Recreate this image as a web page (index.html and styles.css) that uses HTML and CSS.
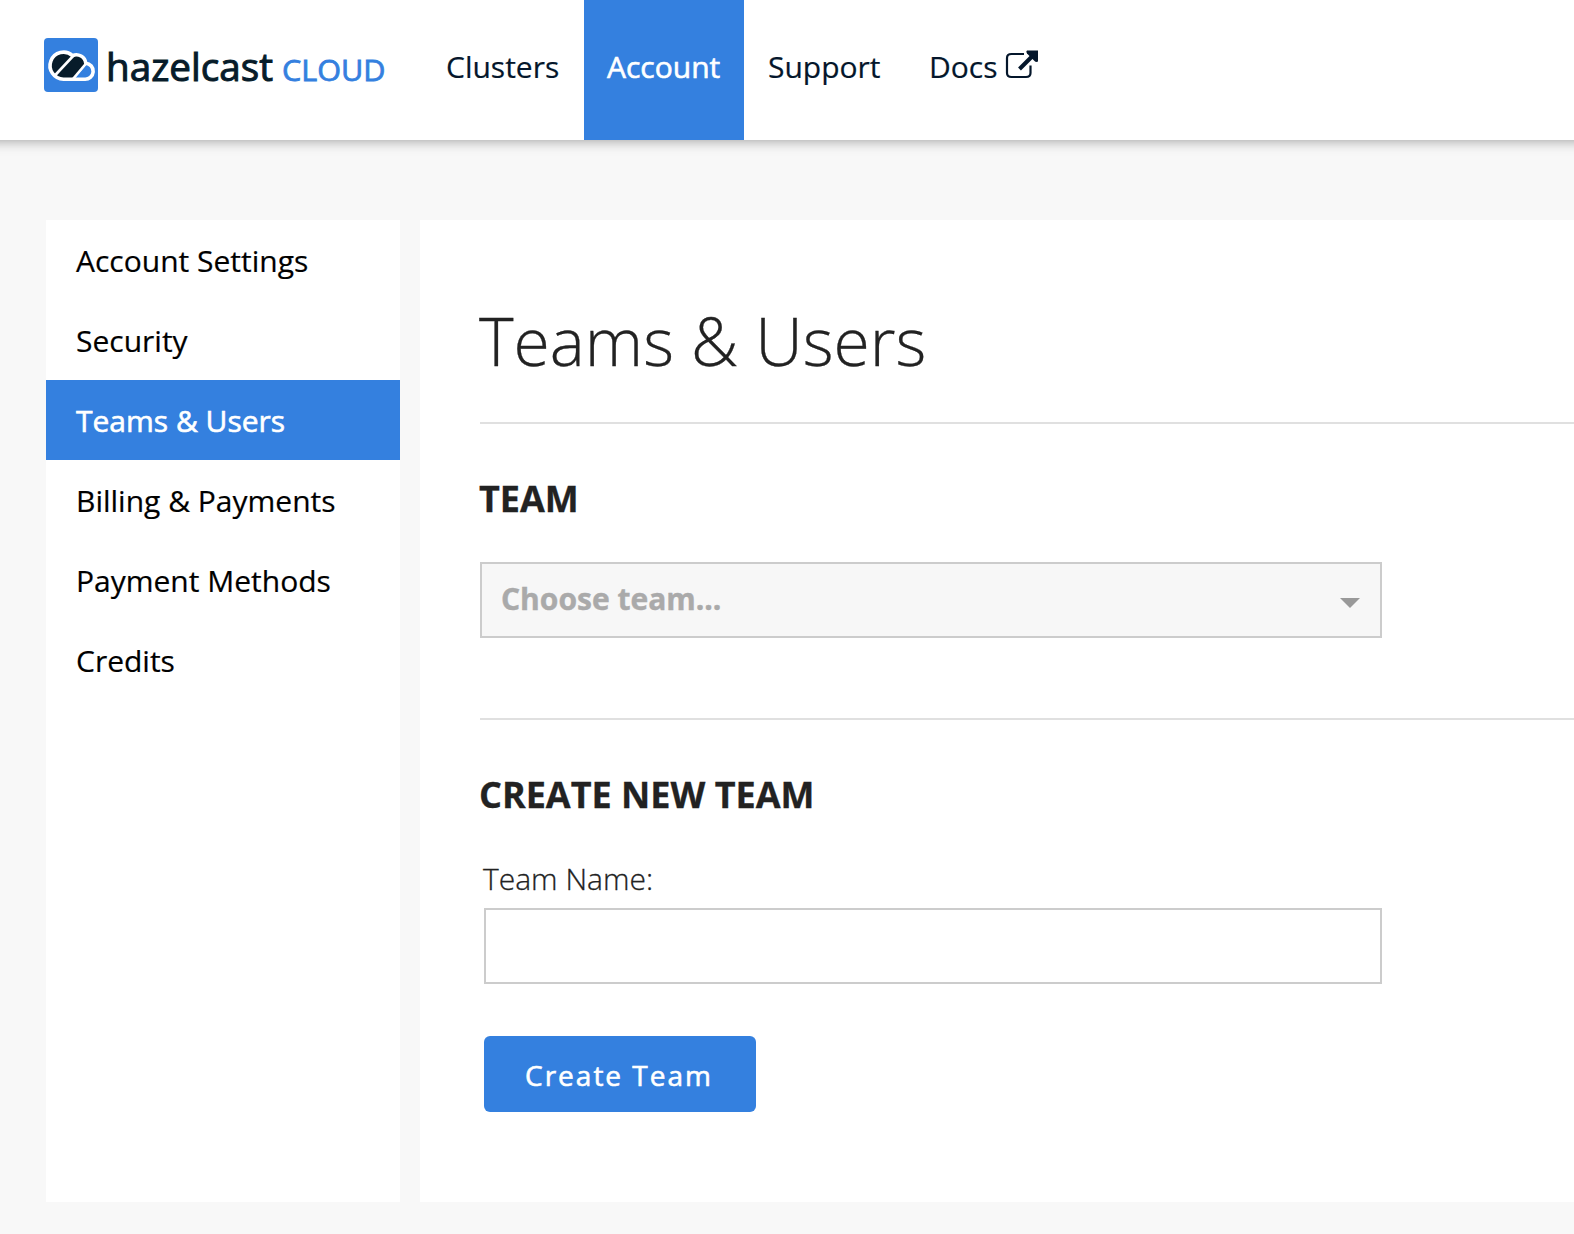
FILE: index.html
```html
<!DOCTYPE html>
<html lang="en">
<head>
<meta charset="utf-8">
<title>Teams &amp; Users</title>
<link rel="stylesheet" href="styles.css">
</head>
<body>
<header class="header">
  <a class="logo" aria-label="hazelcast cloud">
    <svg width="344" height="54" viewBox="0 0 344 54">
      <rect width="54" height="54" rx="4" fill="#3480df"/>
      <clipPath id="cloud"><path d="M19.500 41.200A13.500 13.500 0 1 1 28.500 17.600A9.500 9.500 0 0 1 41.800 25.200A8 8 0 0 1 40.500 41.200Z"/></clipPath>
      <g clip-path="url(#cloud)">
        <path d="M0 10H54L29 42H0Z" fill="#071c2a"/>
        <path d="M9 39.500L31 16" stroke="#fff" stroke-width="2.600"/>
        <path d="M28 42.500L44 23.500" stroke="#fff" stroke-width="2.800"/>
        <path d="M29.500 42.500L45.500 23.500H54V42.500Z" fill="#3480df"/>
      </g>
      <path d="M19.500 41.200A13.500 13.500 0 1 1 28.500 17.600A9.500 9.500 0 0 1 41.800 25.200A8 8 0 0 1 40.500 41.200Z" fill="none" stroke="#fff" stroke-width="3.600" stroke-linejoin="round"/>
      <text class="word" x="62" y="43" textLength="167" lengthAdjust="spacingAndGlyphs">hazelcast</text>
      <text class="word-cloud" x="238" y="43" textLength="103.500" lengthAdjust="spacingAndGlyphs">CLOUD</text>
    </svg>
  </a>
  <nav class="nav">
    <a class="nav-item">Clusters</a>
    <a class="nav-item active">Account</a>
    <a class="nav-item">Support</a>
    <a class="nav-item">Docs<svg class="ext" width="34" height="30" viewBox="0 0 34 30"><path d="M19 4H6.500Q2 4 2 8V23Q2 27 6.500 27H21Q25.500 27 25.500 23V15.500" fill="none" stroke="#04162b" stroke-width="2.200"/><path d="M14.500 19L27 6.500" stroke="#04162b" stroke-width="4"/><path d="M22 0.500H33V11.500Q31 12.500 29.500 11L22 3.500Q20.500 1.500 22 0.500Z" fill="#04162b"/></svg></a>
  </nav>
</header>
<div class="page">
  <aside class="sidebar">
    <a class="side-item">Account Settings</a>
    <a class="side-item">Security</a>
    <a class="side-item active">Teams &amp; Users</a>
    <a class="side-item">Billing &amp; Payments</a>
    <a class="side-item">Payment Methods</a>
    <a class="side-item">Credits</a>
  </aside>
  <main class="content">
    <h1 class="title">Teams &amp; Users</h1>
    <section class="section team">
      <h2 class="heading">TEAM</h2>
      <div class="select"><span>Choose team...</span><svg width="20" height="10" viewBox="0 0 20 10"><path d="M0 0H20L10 10Z" fill="#999"/></svg></div>
    </section>
    <section class="section">
      <h2 class="heading">CREATE NEW TEAM</h2>
      <form class="form">
        <label class="label" for="team-name">Team Name:</label>
        <input class="input" id="team-name" type="text">
        <button class="button" type="button">Create Team</button>
      </form>
    </section>
  </main>
</div>
</body>
</html>
```
FILE: styles.css
```css
* { box-sizing: border-box; }
body {
  margin: 0;
  height: 1234px;
  overflow: hidden;
  background: #f8f8f8;
  font-family: "Open Sans", sans-serif;
  font-size: 30px;
  color: #222;
}
.header {
  position: relative;
  display: flex;
  height: 140px;
  margin: 0 -20px;
  padding-left: 64px;
  background: #fff;
  box-shadow: 0 0 12px 1px rgba(0, 0, 0, 0.36);
}
.logo { width: 380px; padding-top: 38px; }
.logo svg { display: block; }
.word { font-size: 39px; fill: #071c2a; stroke: #071c2a; stroke-width: 1px; }
.word-cloud { font-size: 30px; fill: #3480df; stroke: #3480df; stroke-width: 0.8px; }
.nav { display: flex; }
.nav-item {
  width: 161px;
  padding-left: 24px;
  line-height: 134px;
  color: #04162b;
  white-space: nowrap;
  -webkit-text-stroke: 0.2px currentColor;
}
.nav-item:first-child { width: 160px; padding-left: 22px; }
.nav-item.active { width: 160px; padding-left: 23px; background: #3480df; color: #fff; -webkit-text-stroke-width: 0.6px; }
.ext { margin-left: 8px; vertical-align: -2px; }
.page { display: flex; gap: 20px; padding: 80px 0 0 46px; }
.sidebar { width: 354px; height: 982px; flex: none; background: #fff; }
.side-item {
  display: block;
  height: 80px;
  padding-left: 30px;
  line-height: 82px;
  color: #000;
  -webkit-text-stroke: 0.2px currentColor;
}
.side-item.active { background: #3480df; color: #fff; -webkit-text-stroke-width: 0.6px; }
.content { flex: 1; height: 982px; padding: 70px 0 0 60px; background: #fff; }
.title {
  height: 132px;
  margin: 0 0 0 -1px;
  font-size: 66px;
  line-height: 100px;
  font-weight: 300;
  -webkit-text-stroke: 0.3px currentColor;
}
.section { border-top: 2px solid #e0e0e0; padding-top: 50px; }
.section.team { height: 296px; }
.heading { margin: 0 0 0 -1px; font-size: 36px; line-height: 50px; font-weight: 700; -webkit-text-stroke: 0.3px currentColor; }
.select {
  display: flex;
  justify-content: space-between;
  align-items: center;
  width: 902px;
  height: 76px;
  margin-top: 38px;
  padding: 0 20px 0 19px;
  border: 2px solid #ccc;
  background: #f7f7f7;
  color: #aaa;
  font-weight: 700;
}
.select span { padding-bottom: 3px; -webkit-text-stroke: 0.4px currentColor; }
.select svg { margin-top: 6px; }
.form { display: flex; flex-direction: column; align-items: flex-start; padding: 38px 0 0 4px; }
.label { height: 50px; margin-left: -1px; line-height: 42px; font-weight: 300; -webkit-text-stroke: 0.3px currentColor; }
.input { width: 898px; height: 76px; border: 2px solid #ccc; background: #fff; }
.button {
  width: 272px;
  height: 76px;
  margin-top: 52px;
  padding: 2px 2px 0 0;
  border: 0;
  border-radius: 6px;
  background: #3480df;
  color: #fff;
  font: 400 28px "Open Sans", sans-serif;
  letter-spacing: 2px;
  -webkit-text-stroke: 0.6px currentColor;
}
```
